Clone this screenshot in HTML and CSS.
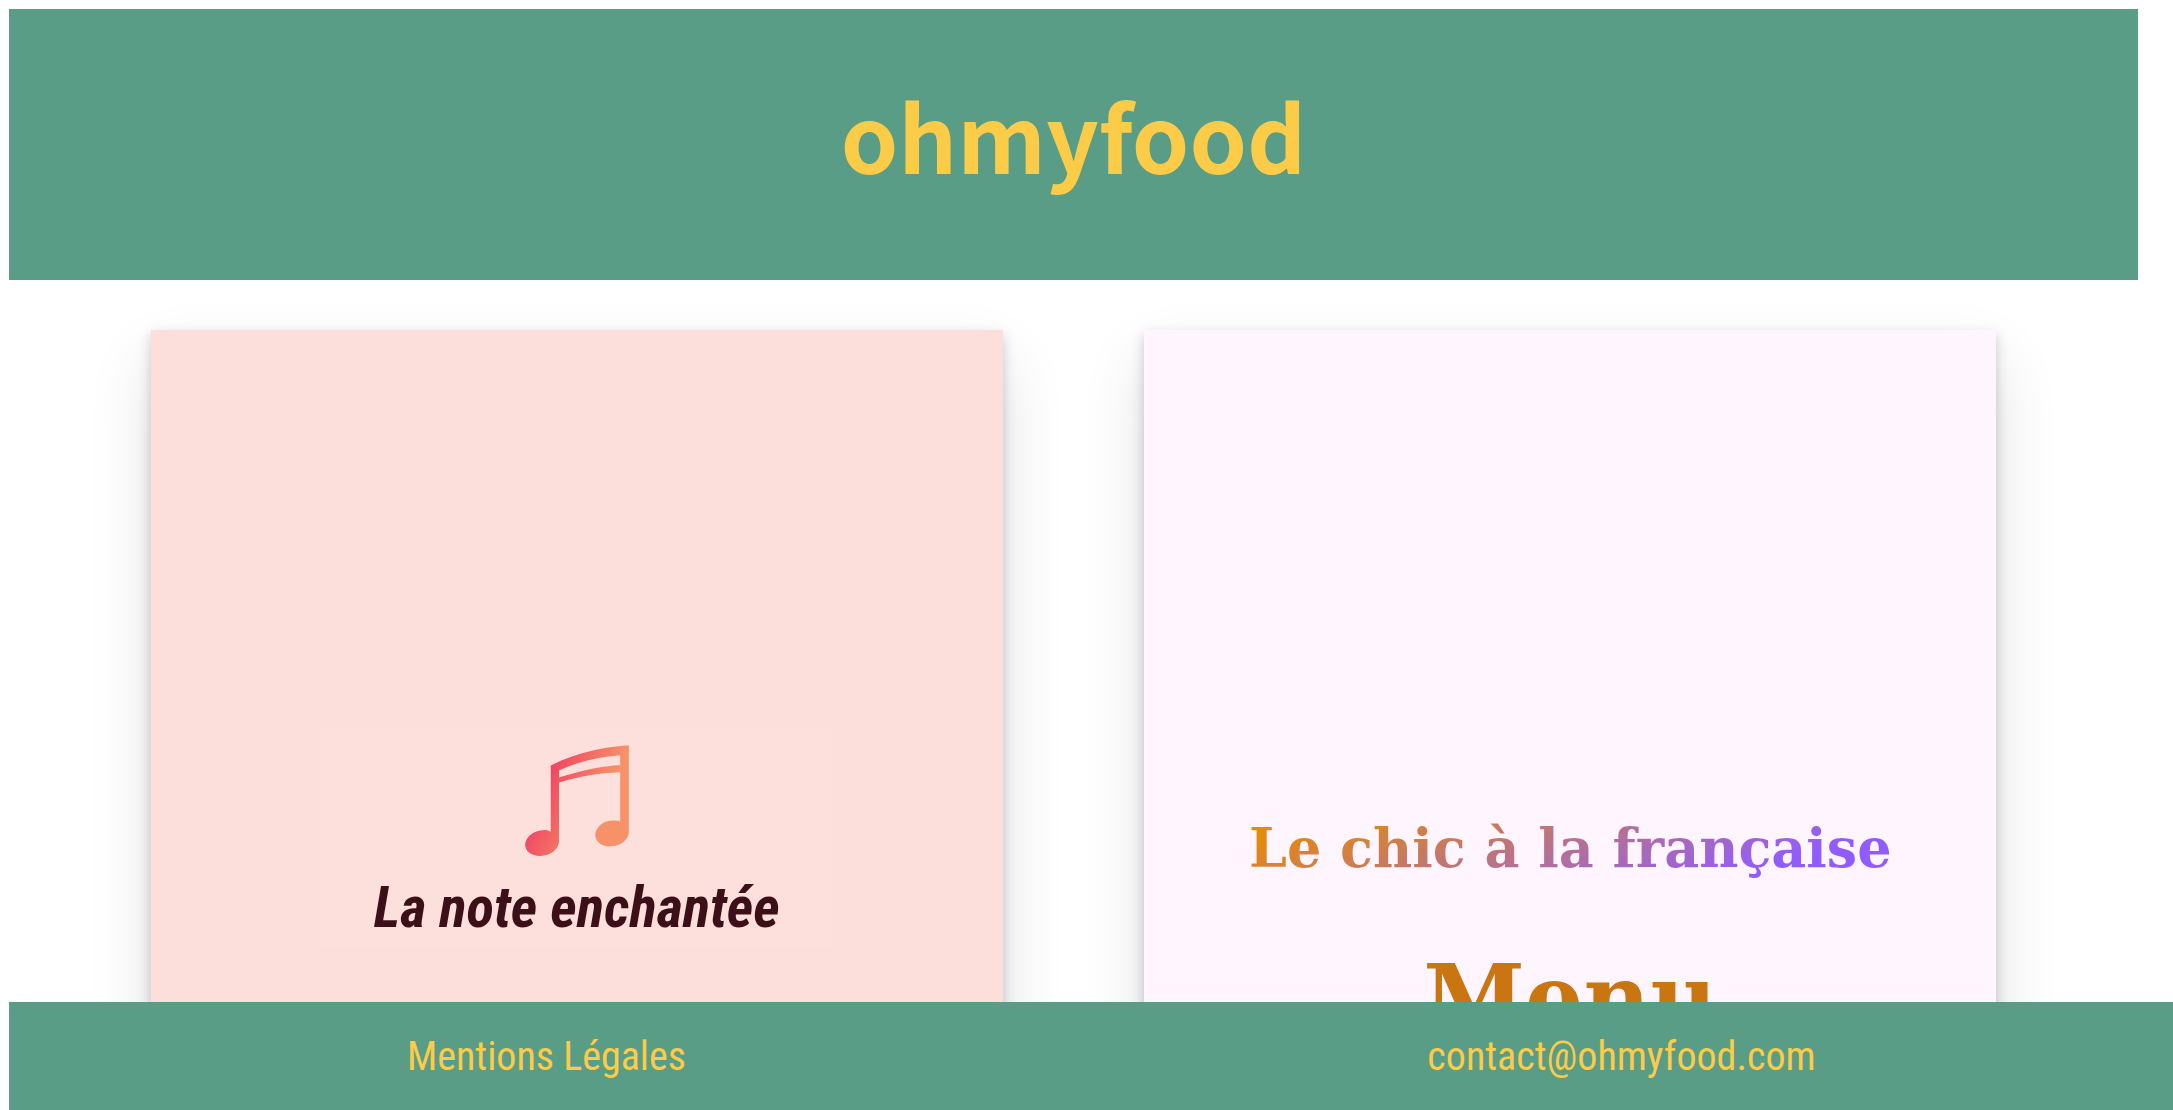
FILE: index.html
```html
<!DOCTYPE html>
<html lang="fr">
<head>
<meta charset="utf-8">
<title>ohmyfood</title>
<link rel="stylesheet" href="styles.css">
</head>
<body>
<header class="site-header"><h1 class="brand">ohmyfood</h1></header>
<main class="cards">
  <article class="card card-note">
    <div class="logo">
      <svg class="logo-icon" viewBox="0 0 312 334" aria-hidden="true">
        <defs>
          <linearGradient id="note" x1="40" y1="150" x2="220" y2="225" gradientUnits="userSpaceOnUse">
            <stop offset="0" stop-color="#ef4562"/><stop offset="1" stop-color="#f79268"/>
          </linearGradient>
        </defs>
        <path fill="url(#note)" fill-rule="evenodd" d="M77 62C142 28 224 7 312 1V263C310 287 286 304 257 305C229 306 211 290 211 270C212 244 239 225 270 227Q281 227 286 231V82C220 84 156 96 102 113V293C98 317 75 333 46 334C17 334 0 320 0 299C2 275 28 257 57 256Q70 255 77 261ZM102 77V98C163 79 218 65 286 60V31C220 36 158 51 102 77Z"/>
      </svg>
      <h2 class="logo-name">La note enchantée</h2>
    </div>
  </article>
  <article class="card card-chic">
    <h2 class="chic-name">Le chic à la française</h2>
    <h3 class="menu-title">Menu</h3>
  </article>
</main>
<footer class="site-footer">
  <a href="#mentions">Mentions Légales</a>
  <a href="mailto:contact@ohmyfood.com">contact@ohmyfood.com</a>
</footer>
</body>
</html>
```
FILE: styles.css
```css
* { box-sizing: border-box; }
body { margin: 9px 35px 0 9px; background: #fff; }
h1, h2, h3 { margin: 0; }
.site-header {
  background: #599d87;
  padding: 60px 0 81px;
  text-align: center;
}
.brand {
  color: #fccb48;
  font: 700 92px/130px "Noto Sans CJK KR", "Noto Sans", sans-serif;
}
.cards {
  display: flex;
  justify-content: space-evenly;
  padding-top: 50px;
}
.card {
  width: 40%;
  min-height: 780px;
  display: flex;
  flex-direction: column;
  align-items: center;
  box-shadow: 0 5px 12px rgba(0, 0, 0, .2), 0 30px 60px rgba(0, 0, 0, .12);
}
.card-note { background: #fcdfdb; padding-top: 397px; }
.card-chic { background: #fff5ff; padding-top: 478px; }
.logo {
  width: 60%;
  height: 221px;
  padding-top: 18px;
  background: #fde0dc;
  display: flex;
  flex-direction: column;
  align-items: center;
}
.logo-icon { width: 104px; height: 111px; flex: none; }
.logo-name {
  margin-top: 12px;
  color: #3b1018;
  font: italic 700 57px/80px "Roboto Condensed", "Liberation Sans Narrow", "Liberation Sans", sans-serif;
  white-space: nowrap;
}
.chic-name {
  font: 700 54px/80px "DejaVu Serif", serif;
  background: linear-gradient(160deg, #e68a0a 10%, #905cff 80%);
  -webkit-background-clip: text;
  background-clip: text;
  color: transparent;
  white-space: nowrap;
}
.menu-title {
  margin-top: 54px;
  color: #c87512;
  font: 700 92px/112px "DejaVu Serif", serif;
}
.site-footer {
  position: fixed;
  left: 9px;
  right: 0;
  bottom: 0;
  height: 108px;
  padding: 2px 14px 0 0;
  background: #599d87;
  display: grid;
  grid-template-columns: 1fr 1fr;
  align-items: center;
  justify-items: center;
}
.site-footer a {
  color: #fccb48;
  font: 400 40px/48px "Roboto Condensed", "Liberation Sans Narrow", Roboto, sans-serif;
  text-decoration: none;
}
```
